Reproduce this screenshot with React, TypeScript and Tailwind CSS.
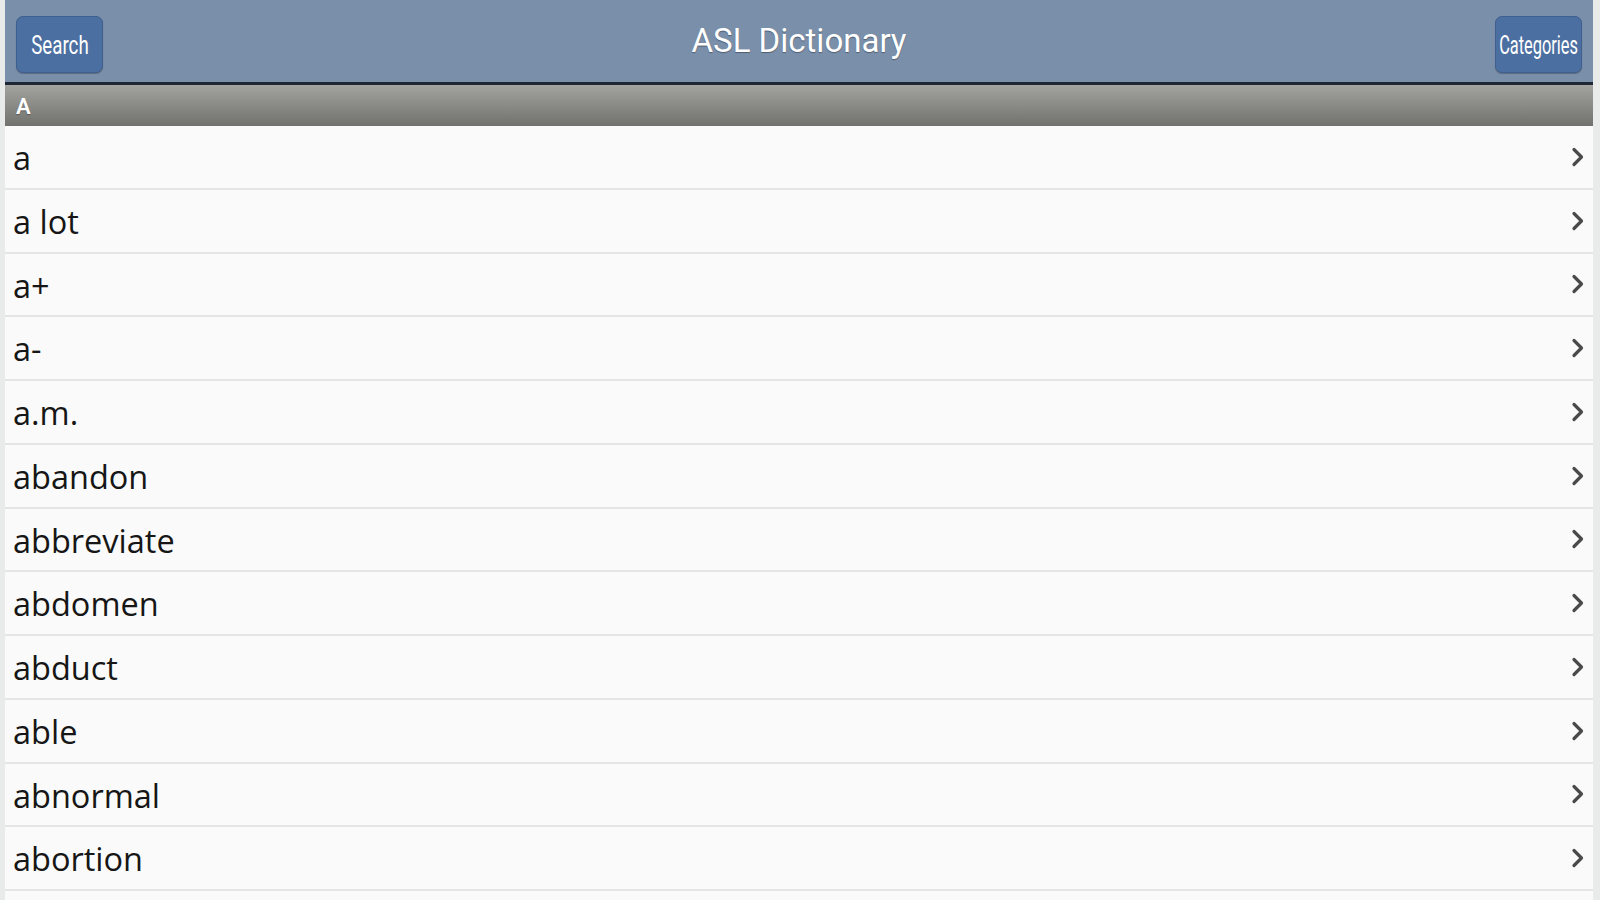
import React from 'react';

const words = [
  'a',
  'a lot',
  'a+',
  'a-',
  'a.m.',
  'abandon',
  'abbreviate',
  'abdomen',
  'abduct',
  'able',
  'abnormal',
  'abortion',
];

const Chevron: React.FC = () => (
  <svg width="14" height="22" viewBox="0 0 14 22" fill="none">
    <path d="M3 3.5 L10.5 11 L3 18.5" stroke="#4a4a4a" strokeWidth="3.2" strokeLinecap="round" strokeLinejoin="round" />
  </svg>
);

const App: React.FC = () => {
  return (
    <div className="h-[900px] w-[1600px] overflow-hidden bg-[#e9ebea] pl-[5px] pr-[7px] font-['Roboto','Liberation_Sans',sans-serif]">
      <div className="flex h-full flex-col">
        {/* top bar */}
        <div className="flex h-[85px] shrink-0 items-start justify-between border-b-[3px] border-[#1e2733] bg-[#7a8faa] px-[11px] pt-[16px]">
          <button className="flex h-[57px] w-[87px] items-center justify-center rounded-[7px] border border-[#3f5f8f] bg-[#4c6fa2] text-white shadow-[0_1px_1px_rgba(0,0,0,0.25)]">
            <span className="inline-block scale-x-[0.72] text-[26px] leading-none">Search</span>
          </button>
          <h1 className="mt-[5px] text-[33px] leading-[40px] text-white [text-shadow:0_1px_1px_rgba(0,0,0,0.35)]">
            ASL Dictionary
          </h1>
          <button className="flex h-[57px] w-[87px] items-center justify-center overflow-hidden rounded-[7px] border border-[#3f5f8f] bg-[#4c6fa2] text-white shadow-[0_1px_1px_rgba(0,0,0,0.25)]">
            <span className="inline-block scale-x-[0.63] whitespace-nowrap text-[26px] leading-none">Categories</span>
          </button>
        </div>

        {/* section header */}
        <div className="flex h-[41px] shrink-0 items-center bg-gradient-to-b from-[#a3a39f] to-[#71716e] px-[11px] pt-[2px] text-[22px] font-semibold text-white [text-shadow:0_1px_1px_rgba(0,0,0,0.3)]">
          A
        </div>

        {/* list */}
        <div className="flex flex-col">
          {words.map((w) => (
            <div
              key={w}
              className="flex h-[63.75px] shrink-0 items-center justify-between border-b-2 border-[#e4e6e5] bg-[#f9faf9] pl-[8px] pr-[8px]"
            >
              <span className="pt-[3px] font-['Open_Sans','Liberation_Sans',sans-serif] text-[32.5px] leading-none text-[#161616]">{w}</span>
              <Chevron />
            </div>
          ))}
        </div>
        <div className="flex-1 bg-[#f9faf9]" />
      </div>
    </div>
  );
};

export default App;
